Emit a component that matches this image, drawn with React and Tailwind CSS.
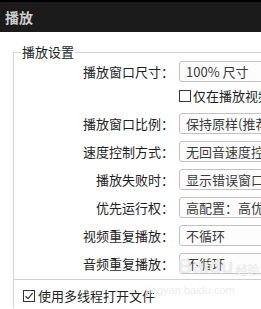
import React from 'react';

const rows = [
  { label: '播放窗口尺寸：', value: '100% 尺寸', extra: '仅在播放视频时使用' },
  { label: '播放窗口比例：', value: '保持原样(推荐)' },
  { label: '速度控制方式：', value: '无回音速度控制' },
  { label: '播放失败时：', value: '显示错误窗口' },
  { label: '优先运行权：', value: '高配置：高优先级' },
  { label: '视频重复播放：', value: '不循环' },
  { label: '音频重复播放：', value: '不循环' },
];

function Check({ checked }) {
  return (
    <span className="flex h-[12px] w-[12px] shrink-0 items-center justify-center border border-[#333] bg-white">
      {checked && (
        <svg width="10" height="10" viewBox="0 0 10 10">
          <path d="M1.5 5.2 L4 7.6 L8.6 2.2" fill="none" stroke="#333" strokeWidth="1.2" />
        </svg>
      )}
    </span>
  );
}

function Combo({ value }) {
  return (
    <div className="flex h-[21px] w-[120px] shrink-0 items-center rounded-[3px] border border-[#c2c2c2] bg-[#fdfdfd] pl-[6px] text-[13px] text-[#3a3a3a] whitespace-nowrap">
      {value}
    </div>
  );
}

export default function App() {
  return (
    <div
      className="relative h-[309px] w-[261px] overflow-hidden bg-white text-[#1e1e1e]"
      style={{ fontFamily: '"Noto Sans CJK SC", "Noto Sans", sans-serif' }}
    >
      <header className="flex h-[32px] items-center border-t-2 border-black bg-[#1b1b1b] pl-[5px]">
        <span className="text-[14px] font-bold leading-none text-[#cdcdcd]">播放</span>
      </header>

      <div className="pl-[13px] pt-[20px]">
        <div className="relative border-l border-t border-[#d6d6d6]">
          <span className="absolute left-[7px] top-[-9px] bg-white px-[1px] text-[13px] leading-[16px] text-[#1e1e1e]">
            播放设置
          </span>

          <div className="flex flex-col pt-[8px]">
            {rows.map((r, i) => (
              <div key={r.label} className={i === 0 ? '' : 'mt-[7px]'}>
                <div className="flex items-center">
                  <div className="w-[160px] shrink-0 text-right text-[13px] leading-none whitespace-nowrap">
                    {r.label}
                  </div>
                  <div className="ml-[5px]">
                    <Combo value={r.value} />
                  </div>
                </div>
                {r.extra && (
                  <div className="ml-[165px] mt-[4px] flex h-[20px] items-center gap-[2px] text-[13px] whitespace-nowrap">
                    <Check />
                    <span>{r.extra}</span>
                  </div>
                )}
              </div>
            ))}
          </div>

          <div className="mt-[5px] border-t border-[#cfcfcf]">
            <div className="flex h-[28px] items-center gap-[3px] pl-[9px] pt-[3px] text-[13px] whitespace-nowrap">
              <Check checked />
              <span>使用多线程打开文件</span>
            </div>
          </div>
        </div>
      </div>

      <div className="pointer-events-none absolute left-[178px] top-[256px] flex items-end gap-[2px] text-[#ececec]">
        <span className="text-[20px] font-bold leading-none" style={{ fontFamily: '"Liberation Sans", sans-serif' }}>
          Baidu
        </span>
        <span className="text-[12px] font-bold leading-none">经验</span>
      </div>
      <div
        className="pointer-events-none absolute left-[146px] top-[285px] text-[11px] leading-none text-[#ededed]"
        style={{ fontFamily: '"Liberation Sans", sans-serif' }}
      >
        jingyan.baidu.com
      </div>
    </div>
  );
}
